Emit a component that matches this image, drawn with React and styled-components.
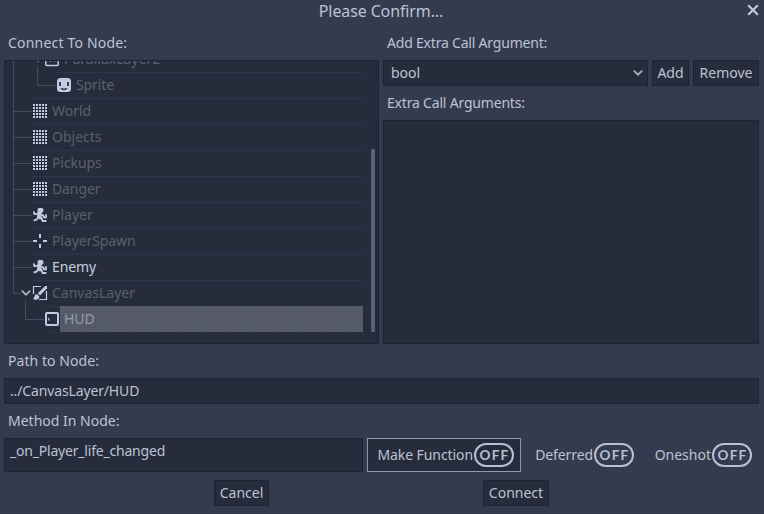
import React from "react";
import styled, { createGlobalStyle } from "styled-components";

const c = {
  base: "#343b4f", panel: "#262c3b", edge: "#1c2335", text: "#bcc2d3",
  dim: "#5a606e", icon: "#c3cbe2", guide: "#464c5a", rule: "#2b374b", grab: "#595e6b",
};

const Global = createGlobalStyle`
  * { box-sizing: border-box; }
  body { margin: 0; background: ${c.base}; overflow: hidden; }
`;
const Dialog = styled.main`
  width: 764px; height: 514px; background: ${c.base}; color: ${c.text};
  border-bottom: 1px solid #2d3346;
  font: 14px/20px "Noto Sans", sans-serif; white-space: pre;
`;
const TitleBar = styled.header`
  height: 33px; display: grid; grid-template-columns: 1fr auto 1fr; padding: 0 5px 0 3px;
`;
const Title = styled.h1`
  grid-column: 2; margin: 0; font-size: 16px; line-height: 22px; font-weight: 400;
  letter-spacing: -0.12px;
`;
const Close = styled.button`
  justify-self: end; width: 12px; height: 12px; margin-top: 4px; padding: 0; border: 0; background: none;
  svg { display: block; }
`;
const Columns = styled.section`
  display: grid; grid-template-columns: 375px 376px; gap: 4px; padding: 0 4px; height: 311px;
`;
const Column = styled.div`display: flex; flex-direction: column;`;
const Label = styled.div`
  padding-left: 4px; height: ${(p) => p.$h || 27}px; line-height: ${(p) => p.$line || 20}px;
  letter-spacing: ${(p) => p.$track || 0}px;
`;
const Panel = styled.div`
  background: ${c.panel}; border: 1px solid ${c.edge}; height: ${(p) => p.$h}px; overflow: hidden;
`;
const TreePanel = styled(Panel)`display: flex;`;
const Tree = styled.div`
  width: 358px; flex: none; display: flex; flex-direction: column; margin-top: -15px;
`;
const Row = styled.div`display: flex; align-items: center; height: 26px; flex: none;`;
const Trunk = styled.span`
  width: 1px; height: ${(p) => p.$h || 26}px; align-self: flex-start; flex: none;
  margin-left: ${(p) => p.$x}px; margin-top: ${(p) => p.$top || 0}px; background: ${c.guide};
`;
const Branch = styled.span`
  width: ${(p) => p.$w}px; height: 1px; margin-top: 1px; flex: none;
  background: ${(p) => (p.$blank ? "transparent" : c.guide)};
`;
const Arrow = styled.span`width: 10px; height: 8px; flex: none; svg { display: block; }`;
const Item = styled.div`
  display: flex; align-items: flex-start; flex: 1; height: 26px;
  border-top: 1px solid ${(p) => (p.$rule === false ? "transparent" : c.rule)};
  > svg { flex: none; margin-top: 4px; }
`;
const Name = styled.span`
  flex: 1; padding-left: 4px; height: 25px; line-height: 23px; color: ${(p) => (p.$on ? "#c6cddf" : c.dim)};
  letter-spacing: ${(p) => p.$track || 0}px;
`;
const SelectedName = styled(Name)`
  margin-top: -1px; height: 26px; background-color: #535966; color: #969cad; line-height: 26px;
  background-image: radial-gradient(#5f6470 0.6px, transparent 0.8px); background-size: 3px 3px;
`;
const EndRule = styled.div`height: 1px; width: 14px; margin-left: 42px; background: ${c.rule};`;
const Scroll = styled.div`
  width: 4px; height: 183px; margin: 88px 0 0 8px; border-radius: 1px; background-color: ${c.grab};
  background-image: radial-gradient(#7c818d 0.5px, transparent 0.8px); background-size: 4px 4px;
`;
const Tools = styled.div`display: flex; gap: 4px; height: 33px;`;
const Button = styled.button`
  width: ${(p) => p.$w}px; height: 26px; padding: 0; border: 1px solid ${c.edge}; background: ${c.panel};
  color: ${c.text}; font: inherit; line-height: 22px; text-align: center;
`;
const Select = styled(Button)`
  display: flex; align-items: center; justify-content: space-between; padding: 0 4px 0 7px; line-height: 24px;
`;
const Form = styled.section`padding: 7px 4px 0;`;
const Field = styled.div`
  height: ${(p) => p.$h}px; width: ${(p) => p.$w}px; border: 1px solid ${c.edge}; background: ${c.panel};
  padding-left: 5px; line-height: 24px; letter-spacing: ${(p) => p.$track || 0}px;
`;
const Options = styled.div`display: flex; gap: 4px;`;
const Toggle = styled.div`
  display: flex; align-items: center; justify-content: flex-end; height: 34px; width: ${(p) => p.$w}px;
  padding-right: 6px; letter-spacing: ${(p) => p.$track || 0}px;
  border: 1px solid ${(p) => (p.$focus ? "#8f97ac" : "transparent")};
  background: ${(p) => (p.$focus ? c.panel : "transparent")};
`;
const Pill = styled.span`
  width: 40px; height: 24px; border: 2px solid #b8c0d5; border-radius: 12px; margin-left: 1px; flex: none;
  display: flex; justify-content: center; padding-left: 1px; color: #b8c0d5;
  font: 700 13.5px/20px Lato, sans-serif; letter-spacing: 1.2px;
`;
const Actions = styled.footer`
  display: flex; justify-content: space-between; padding: 8px 215px 0 214px;
`;

const Svg = ({ children, w = 16, h = 16 }) => (
  <svg width={w} height={h} viewBox={`0 0 ${w} ${h}`} fill="none" stroke={c.icon}>{children}</svg>
);
const cells = [1, 4, 7, 10, 13];
const TileIcon = () => (
  <Svg><g fill={c.icon} stroke="none" shapeRendering="crispEdges">
    {cells.map((y) => cells.map((x) => <rect key={`${x}-${y}`} x={x} y={y} width="2" height="2" />))}
  </g></Svg>
);
const SpriteIcon = () => (
  <Svg><rect x="1" y="1" width="14" height="14" rx="3.5" fill={c.icon} stroke="none" />
    <path d="M4 5v4M12 5v4" stroke={c.panel} strokeWidth="1.8" />
    <path d="M5 11.2c1.6 1.6 4.4 1.6 6 0" stroke={c.panel} strokeWidth="1.5" /></Svg>
);
const RunnerIcon = () => (
  <Svg><rect x="5.6" y="1" width="5.8" height="4.6" rx="1.6" fill={c.icon} stroke="none" />
    <path d="M5.4 4.8h4.4L9.4 9.6 11 11.4 7.8 12.6 5 10.6z" fill={c.icon} stroke="none" />
    <path d="M1.8 4.4 2.4 7.2 6 6.6M6.4 9.6 5 12.4 1.6 13.6M9.2 10.6 10.6 14 14.4 14M9.2 8.2h2L12 10.4h2V7.2" strokeWidth="1.8" strokeLinejoin="round" />
  </Svg>
);
const CrossIcon = () => <Svg><path d="M8 1v4M8 11v4M1 8h4M11 8h4" strokeWidth="2" /></Svg>;
const BrushIcon = () => (
  <Svg><path d="M1.5 9V1.5H9M14.5 6v8.5H7" strokeWidth="1.2" />
    <path d="M15 1 13.2 1 5.8 8.2 8 10.4 15 3.2z" fill={c.icon} stroke="none" />
    <path d="M5 9.2c-2 0-2.4 1.3-2.6 2.6-.2 1-.8 1.7-1.6 2 2.5 1.8 6.4 1 6.6-2.3z" fill={c.icon} stroke="none" /></Svg>
);
const ControlIcon = () => (
  <Svg><rect x="2" y="2" width="12" height="12" rx="1" strokeWidth="2" /><path d="M4.8 7v2.4" strokeWidth="1.2" /></Svg>
);
const LayerIcon = () => (
  <Svg><rect x="1.8" y="2" width="12.4" height="12.5" rx="1" strokeWidth="1.5" />
    <path d="M6.5 8.5v2M10.5 8.5v2" strokeWidth="1.5" /></Svg>
);
const Chevron = () => <Svg w={10} h={8}><path d="M.8 1.6 5 5.6l4.2-4" strokeWidth="1.9" stroke="#a5adbf" /></Svg>;

const nodes = [
  { name: "World", Icon: TileIcon },
  { name: "Objects", Icon: TileIcon },
  { name: "Pickups", Icon: TileIcon, track: -0.1 },
  { name: "Danger", Icon: TileIcon, track: -0.1 },
  { name: "Player", Icon: RunnerIcon },
  { name: "PlayerSpawn", Icon: CrossIcon, track: -0.1 },
  { name: "Enemy", Icon: RunnerIcon, on: true, track: -0.1 },
];

export default function App() {
  return (
    <>
      <Global />
      <Dialog>
        <TitleBar>
          <Title>Please Confirm...</Title>
          <Close aria-label="Close">
            <Svg w={12} h={12}><path d="m1.2 1.2 9.6 9.6m0-9.6-9.6 9.6" strokeWidth="2.1" /></Svg>
          </Close>
        </TitleBar>
        <Columns>
          <Column>
            <Label $track={0.19}>Connect To Node:</Label>
            <TreePanel $h={284}>
              <Tree>
                <Row>
                  <Trunk $x={8} /><Branch $w={19} $blank /><Arrow><Chevron /></Arrow><Branch $w={1} $blank />
                  <Item $rule={false}><LayerIcon /><Name>ParallaxLayer2</Name></Item>
                </Row>
                <Row>
                  <Trunk $x={8} /><Trunk $x={23} $top={-6} $h={20} /><Branch $w={18} />
                  <Item><SpriteIcon /><Name $track={-0.1}>Sprite</Name></Item>
                </Row>
                {nodes.map(({ name, Icon, on, track }) => (
                  <Row key={name}>
                    <Trunk $x={8} /><Branch $w={18} />
                    <Item><Icon /><Name $on={on} $track={track}>{name}</Name></Item>
                  </Row>
                ))}
                <Row>
                  <Trunk $x={8} $h={14} /><Branch $w={7} /><Arrow><Chevron /></Arrow><Branch $w={1} $blank />
                  <Item><BrushIcon /><Name>CanvasLayer</Name></Item>
                </Row>
                <Row>
                  <Trunk $x={20} $top={-6} $h={20} /><Branch $w={18} />
                  <Item><ControlIcon /><SelectedName>HUD</SelectedName></Item>
                </Row>
                <EndRule />
              </Tree>
              <Scroll />
            </TreePanel>
          </Column>
          <Column>
            <Label $track={-0.2}>Add Extra Call Argument:</Label>
            <Tools>
              <Select $w={265}>bool<Chevron /></Select>
              <Button $w={37}>Add</Button>
              <Button $w={66}>Remove</Button>
            </Tools>
            <Label $track={-0.19}>Extra Call Arguments:</Label>
            <Panel $h={224} />
          </Column>
        </Columns>
        <Form>
          <Label $track={0.06}>Path to Node:</Label>
          <Field $w={755} $h={26} $track={-0.14}>../CanvasLayer/HUD</Field>
          <Label $h={34} $line={34}>Method In Node:</Label>
          <Options>
            <Field $w={359} $h={34} $track={-0.2}>_on_Player_life_changed</Field>
            <Toggle $w={154} $track={-0.08} $focus>Make Function<Pill>OFF</Pill></Toggle>
            <Toggle $w={116} $track={-0.1}>Deferred<Pill>OFF</Pill></Toggle>
            <Toggle $w={114}>Oneshot<Pill>OFF</Pill></Toggle>
          </Options>
        </Form>
        <Actions>
          <Button $w={55}>Cancel</Button>
          <Button $w={66}>Connect</Button>
        </Actions>
      </Dialog>
    </>
  );
}
